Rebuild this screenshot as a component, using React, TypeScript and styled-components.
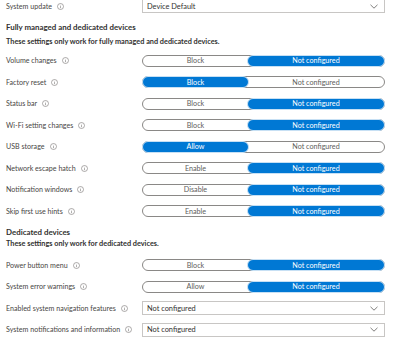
import React from 'react';
import styled, {createGlobalStyle} from 'styled-components';

const GlobalStyle = createGlobalStyle`
  html, body {
    margin: 0;
    background: #ffffff;
  }
  body {
    font-family: Lato, "Noto Sans", sans-serif;
    color: #323130;
  }
`;

type ToggleSetting = {label: string; left: string; right: string; selected: 'left' | 'right'};
type SelectSetting = {label: string; value: string};

const managed: ToggleSetting[] = [
  {label: 'Volume changes', left: 'Block', right: 'Not configured', selected: 'right'},
  {label: 'Factory reset', left: 'Block', right: 'Not configured', selected: 'left'},
  {label: 'Status bar', left: 'Block', right: 'Not configured', selected: 'right'},
  {label: 'Wi-Fi setting changes', left: 'Block', right: 'Not configured', selected: 'right'},
  {label: 'USB storage', left: 'Allow', right: 'Not configured', selected: 'left'},
  {label: 'Network escape hatch', left: 'Enable', right: 'Not configured', selected: 'right'},
  {label: 'Notification windows', left: 'Disable', right: 'Not configured', selected: 'right'},
  {label: 'Skip first use hints', left: 'Enable', right: 'Not configured', selected: 'right'},
];

const dedicatedToggles: ToggleSetting[] = [
  {label: 'Power button menu', left: 'Block', right: 'Not configured', selected: 'right'},
  {label: 'System error warnings', left: 'Allow', right: 'Not configured', selected: 'right'},
];

const dedicatedSelects: SelectSetting[] = [
  {label: 'Enabled system navigation features', value: 'Not configured'},
  {label: 'System notifications and information', value: 'Not configured'},
];

const Page = styled.div`
  width: 400px;
  height: 339px;
  overflow: hidden;
  padding-left: 6px;
  box-sizing: border-box;
`;

const Row = styled.div<{$h?: number; $mt?: number}>`
  display: flex;
  align-items: center;
  height: ${p => p.$h ?? 21.5}px;
  margin-top: ${p => p.$mt ?? 0}px;
`;

const Label = styled.div`
  width: 136px;
  display: flex;
  align-items: center;
  gap: 5px;
  font-size: 7.1px;
  color: #484644;
  white-space: nowrap;
`;

const Heading = styled.div<{$mt: number}>`
  margin-top: ${p => p.$mt}px;
  font-size: 7.9px;
  line-height: 12px;
  font-weight: 700;
  color: #323130;
`;

const Note = styled.div<{$mt: number}>`
  margin-top: ${p => p.$mt}px;
  font-size: 7.3px;
  line-height: 12px;
  font-weight: 700;
  color: #323130;
`;

const List = styled.div<{$pt: number}>`
  padding-top: ${p => p.$pt}px;
`;

const Select = styled.div`
  width: 243px;
  height: 14px;
  box-sizing: border-box;
  border: 1px solid #c8c6c4;
  display: flex;
  align-items: center;
  justify-content: space-between;
  padding: 0 6px 0 4px;
  font-size: 7.4px;
  color: #323130;
`;

const Toggle = styled.div`
  width: 243px;
  height: 12px;
  box-sizing: border-box;
  border: 1px solid #8a8886;
  border-radius: 6px;
  display: grid;
  grid-template-columns: 105px 1fr;
`;

const Segment = styled.div<{$on: boolean}>`
  display: flex;
  align-items: center;
  justify-content: center;
  border-radius: 6px;
  margin: -1px;
  font-size: 7.2px;
  line-height: 1;
  background: ${p => (p.$on ? '#0078d4' : 'transparent')};
  color: ${p => (p.$on ? '#ffffff' : '#605e5c')};
  border: 1px solid ${p => (p.$on ? '#c7e0f4' : 'transparent')};
`;

const InfoIcon = () => (
  <svg width="7" height="7" viewBox="0 0 7 7">
    <circle cx="3.5" cy="3.5" r="3" fill="none" stroke="#8a8886" strokeWidth="0.7"/>
    <line x1="3.5" y1="3.1" x2="3.5" y2="5.2" stroke="#8a8886" strokeWidth="0.7"/>
    <circle cx="3.5" cy="2.1" r="0.4" fill="#8a8886"/>
  </svg>
);

const Chevron = () => (
  <svg width="8" height="5" viewBox="0 0 8 5">
    <polyline points="0.5,0.8 4,4.2 7.5,0.8" fill="none" stroke="#605e5c" strokeWidth="0.8"/>
  </svg>
);

const SettingLabel = ({text}: {text: string}) => (
  <Label>
    <span>{text}</span>
    <InfoIcon/>
  </Label>
);

const ToggleRow = ({s}: {s: ToggleSetting}) => (
  <Row>
    <SettingLabel text={s.label}/>
    <Toggle>
      <Segment $on={s.selected === 'left'}>{s.left}</Segment>
      <Segment $on={s.selected === 'right'}>{s.right}</Segment>
    </Toggle>
  </Row>
);

const SelectRow = ({s, h, mt}: {s: SelectSetting; h?: number; mt?: number}) => (
  <Row $h={h} $mt={mt}>
    <SettingLabel text={s.label}/>
    <Select>
      <span>{s.value}</span>
      <Chevron/>
    </Select>
  </Row>
);

export default function App() {
  return (
    <Page>
      <GlobalStyle/>
      <SelectRow s={{label: 'System update', value: 'Device Default'}} h={14} mt={-1}/>

      <Heading $mt={8}>Fully managed and dedicated devices</Heading>
      <Note $mt={3}>These settings only work for fully managed and dedicated devices.</Note>
      <List $pt={2}>
        {managed.map(s => <ToggleRow key={s.label} s={s}/>)}
      </List>

      <Heading $mt={4}>Dedicated devices</Heading>
      <Note $mt={0}>These settings only work for dedicated devices.</Note>
      <List $pt={4.5}>
        {dedicatedToggles.map(s => <ToggleRow key={s.label} s={s}/>)}
        {dedicatedSelects.map(s => <SelectRow key={s.label} s={s}/>)}
      </List>
    </Page>
  );
}
